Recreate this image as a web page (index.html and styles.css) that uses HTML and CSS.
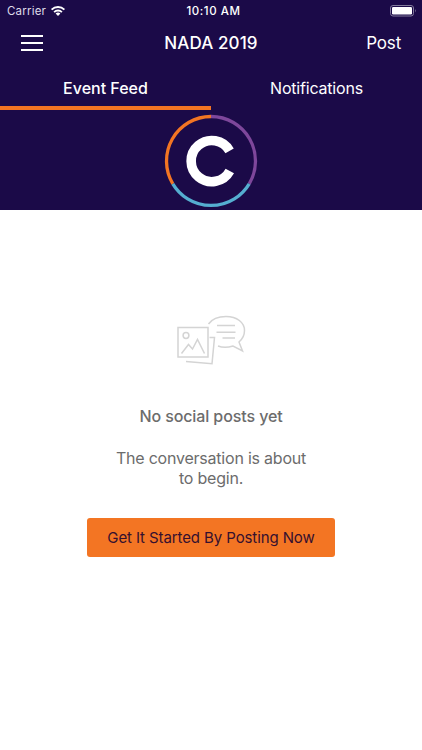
FILE: index.html
```html
<!DOCTYPE html>
<html lang="en">
<head>
	<meta charset="UTF-8">
	<title>NADA 2019</title>
	<link rel="stylesheet" href="styles.css">
</head>
<body>
<div class="header">
	<div class="status">
		<div class="status-left">
			<span class="carrier">Carrier</span>
			<svg class="wifi" width="16" height="12" viewBox="0 0 16 12">
				<path d="M1.6 4.6A9.2 9.2 0 0 1 14.4 4.6M4.1 7.1A5.6 5.6 0 0 1 11.9 7.1" fill="none" stroke="#fff" stroke-width="1.9"/>
				<path d="M8 11L5.6 8.6A3.4 3.4 0 0 1 10.4 8.6Z" fill="#fff"/>
			</svg>
		</div>
		<span class="time">10:10 AM</span>
		<svg class="battery" width="27" height="12" viewBox="0 0 27 12">
			<rect x="0.5" y="0.5" width="23" height="10.5" rx="2.5" fill="none" stroke="#837b9c"/>
			<rect x="2" y="2" width="20" height="7.5" rx="1.2" fill="#fff"/>
			<path d="M25 4Q26.6 5.75 25 7.5Z" fill="#837b9c"/>
		</svg>
	</div>
	<div class="nav">
		<div class="menu"><i></i><i></i><i></i></div>
		<h1 class="title">NADA 2019</h1>
		<span class="post">Post</span>
	</div>
	<ul class="tabs">
		<li class="tab selected">Event Feed</li>
		<li class="tab">Notifications</li>
	</ul>
	<div class="banner">
		<svg width="94" height="94" viewBox="0 0 94 94" fill="none">
			<g stroke-width="3.3">
				<path d="M8.8 69.8A44.5 44.5 0 0 1 47 2.5" stroke="#f37523"/>
				<path d="M47 2.5A44.5 44.5 0 0 1 85.2 69.8" stroke="#7e479b"/>
				<path d="M85.2 69.8A44.5 44.5 0 0 1 8.8 69.8" stroke="#55aed0"/>
			</g>
			<path d="M65.6 36.8A20.6 20.6 0 1 0 65.8 57" stroke="#fff" stroke-width="9.6"/>
		</svg>
	</div>
</div>

<div class="empty">
	<!-- photo cards with a speech bubble -->
	<svg class="empty-icon" width="70" height="52" viewBox="0 0 70 52" fill="none" stroke="#d4d4d4" stroke-width="1.5">
		<path d="M2 12.5H32V42H2Z"/>
		<circle cx="10" cy="20.5" r="2.9"/>
		<path d="M5.5 38.5L12.5 29.5L16.5 34L21.5 24.5L28.5 38.5"/>
		<path d="M33.5 22.5H38.5L36 48.7L10 46.5"/>
		<path d="M32.5 9C36 4 42 1.5 50 1.5C61 1.5 68.5 7.5 68.5 15.5C68.5 21 66.5 24 63 27L66.5 36L57 31C52 32.5 46 32.5 42 31"/>
		<path d="M41 10.5H59M40.5 17.3H59.5M46.5 23H59"/>
	</svg>
	<h2 class="empty-title">No social posts yet</h2>
	<p class="empty-text">The conversation is about<br>to begin.</p>
	<button class="start">Get It Started By Posting Now</button>
</div>
</body>
</html>
```

FILE: styles.css
```css
* {
	margin: 0;
	padding: 0;
	box-sizing: border-box;
}

body {
	background: #ffffff;
	font-family: Inter, "Liberation Sans", sans-serif;
}

.header {
	height: 210px;
	background: #1b0a48;
	color: #ffffff;
}

.status {
	height: 22px;
	display: grid;
	grid-template-columns: 1fr auto 1fr;
	align-items: center;
	padding: 0 5px 0 7px;
	font-size: 11.5px;
	line-height: 22px;
}

.status-left {
	display: flex;
	align-items: center;
	gap: 4px;
}

.carrier {
	color: #dedae8;
	letter-spacing: 0.2px;
}

.time {
	padding-left: 3px;
	font-weight: 500;
	letter-spacing: 0.55px;
}

.battery {
	justify-self: end;
}

.nav {
	height: 43px;
	display: grid;
	grid-template-columns: 1fr auto 1fr;
	align-items: center;
	padding: 0 21px;
}

.menu {
	width: 22px;
	display: flex;
	flex-direction: column;
	gap: 5px;
	padding-bottom: 2px;
}

.menu i {
	height: 2px;
	background: #ffffff;
}

.title {
	padding-bottom: 1px;
	font-size: 17px;
	font-weight: 500;
	letter-spacing: 0.1px;
}

.post {
	padding-bottom: 1px;
	justify-self: end;
	font-size: 17px;
	letter-spacing: -0.2px;
}

.tabs {
	height: 45px;
	display: flex;
	list-style: none;
}

.tab {
	width: 50%;
	line-height: 47px;
	text-align: center;
	font-size: 16px;
	letter-spacing: -0.2px;
}

.selected {
	border-bottom: 4px solid #f37523;
	font-weight: 500;
	letter-spacing: 0;
}

.banner {
	height: 100px;
	display: flex;
	justify-content: center;
	padding-top: 4px;
}

.empty {
	display: flex;
	flex-direction: column;
	align-items: center;
	padding-top: 105px;
	color: #6c6c6c;
	text-align: center;
}

.empty-title {
	margin-top: 39px;
	font-size: 16px;
	line-height: 20px;
	font-weight: 500;
	letter-spacing: -0.1px;
}

.empty-text {
	margin-top: 23px;
	font-size: 16px;
	line-height: 19.5px;
	letter-spacing: -0.22px;
}

.start {
	width: 248px;
	height: 39px;
	margin-top: 30px;
	border: none;
	border-radius: 3px;
	background: #f37523;
	color: #35102f;
	font-family: inherit;
	font-size: 15px;
	letter-spacing: -0.1px;
}
```
